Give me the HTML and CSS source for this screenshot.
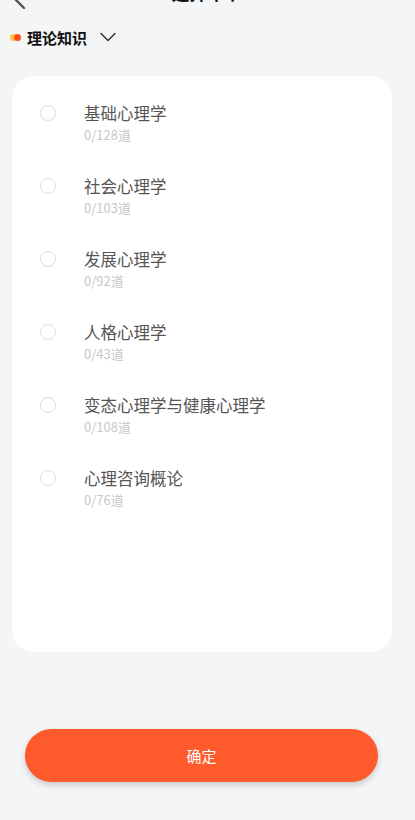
FILE: index.html
```html
<!DOCTYPE html>
<html lang="zh">
<head>
<meta charset="utf-8">
<link rel="stylesheet" href="styles.css">
</head>
<body>
<div class="page">
  <header class="nav">
    <svg class="back" width="14" height="24" viewBox="0 0 14 24"><path d="M12 2 L2 12 L12 22" fill="none" stroke="#555" stroke-width="2.4" stroke-linecap="round" stroke-linejoin="round"/></svg>
    <h1 class="nav-title">选择章节</h1>
  </header>
  <div class="cat">
    <span class="dot"><i class="d1"></i><i class="d2"></i></span>
    <span class="cat-name">理论知识</span>
    <svg class="chev" width="16" height="10" viewBox="0 0 16 10"><path d="M1 1.5 L8 8.5 L15 1.5" fill="none" stroke="#333" stroke-width="1.5" stroke-linecap="round" stroke-linejoin="round"/></svg>
  </div>
  <main class="card">
    <div class="item"><span class="radio"></span><div class="txt"><div class="t">基础心理学</div><div class="s">0/128道</div></div></div>
    <div class="item"><span class="radio"></span><div class="txt"><div class="t">社会心理学</div><div class="s">0/103道</div></div></div>
    <div class="item"><span class="radio"></span><div class="txt"><div class="t">发展心理学</div><div class="s">0/92道</div></div></div>
    <div class="item"><span class="radio"></span><div class="txt"><div class="t">人格心理学</div><div class="s">0/43道</div></div></div>
    <div class="item"><span class="radio"></span><div class="txt"><div class="t">变态心理学与健康心理学</div><div class="s">0/108道</div></div></div>
    <div class="item"><span class="radio"></span><div class="txt"><div class="t">心理咨询概论</div><div class="s">0/76道</div></div></div>
  </main>
  <div class="foot">
    <button class="ok">确定</button>
  </div>
</div>
</body>
</html>
```
FILE: styles.css
```css
* { box-sizing: border-box; }
html, body { margin: 0; padding: 0; }
body {
  background: #f3f5f7;
  font-family: "Noto Sans CJK SC", "Noto Sans", sans-serif;
  width: 415px;
  height: 820px;
  overflow: hidden;
}
.page {
  display: flex;
  flex-direction: column;
  height: 820px;
}
.nav {
  position: relative;
  height: 44px;
  margin-top: -18px;
  display: flex;
  align-items: center;
  justify-content: center;
}
.back {
  position: absolute;
  left: 12px;
  top: 4px;
}
.nav-title {
  margin: 0;
  font-size: 18px;
  font-weight: 700;
  color: #111;
  line-height: 20px;
  position: relative;
  top: -12px;
}
.cat {
  display: flex;
  align-items: center;
  height: 30px;
  padding-left: 10px;
  margin-top: -4px;
}
.dot {
  position: relative;
  width: 11px;
  height: 7px;
  margin-right: 6px;
}
.dot i {
  position: absolute;
  top: 0;
  width: 7px;
  height: 7px;
  border-radius: 50%;
}
.d1 { left: 0; background: #ffc53d; }
.d2 { left: 4px; background: #ff4d1a; }
.cat-name {
  font-size: 15px;
  font-weight: 700;
  color: #111;
}
.chev { margin-left: 13px; }
.card {
  margin: 24px 23px 0 12px;
  height: 576px;
  background: #fff;
  border-radius: 22px;
  padding-top: 24px;
}
.item {
  display: flex;
  align-items: flex-start;
  height: 73px;
  padding-left: 28px;
}
.radio {
  width: 16px;
  height: 16px;
  border: 1px solid #ddd;
  border-radius: 50%;
  margin-top: 5px;
}
.txt { margin-left: 28px; }
.t {
  font-size: 16.5px;
  color: #555;
  line-height: 26px;
}
.s {
  font-size: 13px;
  color: #c8c8c8;
  line-height: 18px;
}
.foot {
  flex: 1;
  display: flex;
  align-items: flex-start;
  padding: 77px 37px 0 25px;
}
.ok {
  width: 100%;
  height: 53px;
  border: none;
  border-radius: 27px;
  background: #ff5a2c;
  color: #fff;
  font-family: inherit;
  font-size: 15px;
  box-shadow: 0 3px 6px rgba(0,0,0,0.18);
}
```
